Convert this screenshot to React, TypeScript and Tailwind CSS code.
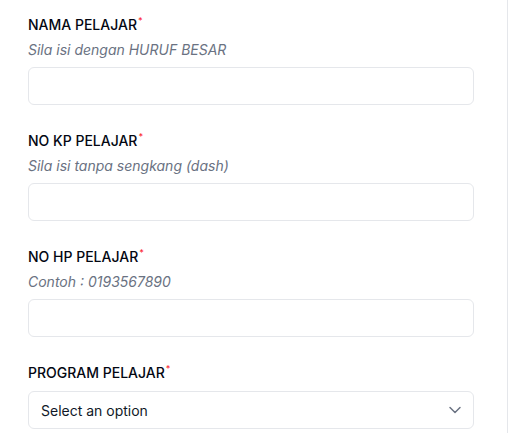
import { ChevronDown } from "lucide-react";

const fields = [
  { label: "NAMA PELAJAR", hint: "Sila isi dengan HURUF BESAR" },
  { label: "NO KP PELAJAR", hint: "Sila isi tanpa sengkang (dash)" },
  { label: "NO HP PELAJAR", hint: "Contoh : 0193567890" },
];

function Label({ text }: { text: string }) {
  return (
    <div className="h-5 text-[14px] leading-5 font-medium text-gray-950">
      {text}
      <span className="relative -top-[6px] ml-px text-[9px] leading-none text-red-500">*</span>
    </div>
  );
}

export default function App() {
  return (
    <div className="h-[433px] w-[508px] overflow-hidden bg-white font-['Inter',sans-serif]">
      <div className="h-full w-full border-r border-gray-200 pl-[28px] pr-[33px] pt-[15px]">
        <div className="flex flex-col gap-[26px]">
          {fields.map((f) => (
            <div key={f.label}>
              <Label text={f.label} />
              <div className="mt-[5px] text-[14px] leading-5 italic text-gray-500">
                {f.hint}
              </div>
              <input
                type="text"
                className="mt-[7px] block h-[38px] w-full rounded-md border border-gray-200 bg-white px-3 text-sm outline-none"
              />
            </div>
          ))}
          <div>
            <Label text="PROGRAM PELAJAR" />
            <button className="mt-[8px] flex h-[38px] w-full items-center justify-between rounded-md border border-gray-200 bg-white pl-3 pr-[8px] text-[14px] text-gray-900">
              <span>Select an option</span>
              <ChevronDown className="h-5 w-5 text-gray-500" strokeWidth={1.75} />
            </button>
          </div>
        </div>
      </div>
    </div>
  );
}
